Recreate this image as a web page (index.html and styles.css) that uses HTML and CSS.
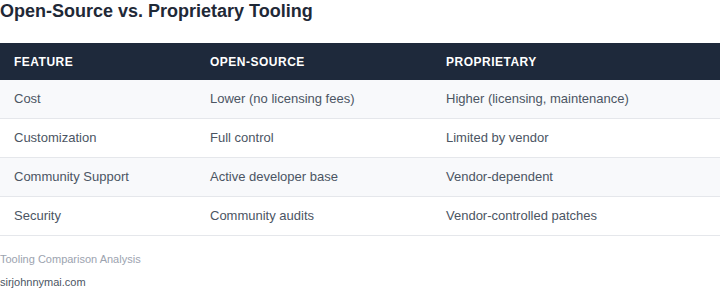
FILE: index.html
```html
<!DOCTYPE html>
<html>
<head>
<meta charset="utf-8">
<link rel="stylesheet" href="styles.css">
</head>
<body>
<h1 class="title">Open-Source vs. Proprietary Tooling</h1>
<table class="cmp">
  <colgroup><col class="c1"><col class="c2"><col class="c3"></colgroup>
  <thead>
    <tr><th>Feature</th><th>Open-Source</th><th>Proprietary</th></tr>
  </thead>
  <tbody>
    <tr><td>Cost</td><td>Lower (no licensing fees)</td><td>Higher (licensing, maintenance)</td></tr>
    <tr><td>Customization</td><td>Full control</td><td>Limited by vendor</td></tr>
    <tr><td>Community Support</td><td>Active developer base</td><td>Vendor-dependent</td></tr>
    <tr><td>Security</td><td>Community audits</td><td>Vendor-controlled patches</td></tr>
  </tbody>
</table>
<p class="caption">Tooling Comparison Analysis</p>
<p class="site">sirjohnnymai.com</p>
</body>
</html>
```
FILE: styles.css
```css
html, body {
  margin: 0;
  padding: 0;
  background: #ffffff;
  font-family: "Liberation Sans", Arial, sans-serif;
}
.title {
  margin: 0;
  font-size: 18px;
  line-height: 23px;
  font-weight: bold;
  color: #1f2937;
}
.cmp {
  margin-top: 20px;
  width: 720px;
  border-collapse: collapse;
  table-layout: fixed;
}
.c1 { width: 196px; }
.c2 { width: 236px; }
.c3 { width: 288px; }
.cmp th {
  background: #1e293b;
  color: #ffffff;
  font-size: 12px;
  font-weight: bold;
  text-transform: uppercase;
  letter-spacing: 0.5px;
  text-align: left;
  height: 37px;
  padding: 0 14px;
}
.cmp td {
  font-size: 13px;
  color: #4b5563;
  height: 36px;
  padding: 0 14px 2px;
  border-bottom: 1px solid #e5e7eb;
}
.cmp tbody tr:nth-child(odd) td { background: #f8f9fb; }
.caption {
  margin: 16px 0 0;
  font-size: 11px;
  line-height: 14px;
  color: #9ca3af;
}
.site {
  margin: 9px 0 0;
  font-size: 11px;
  line-height: 14px;
  color: #4b5563;
}
```
